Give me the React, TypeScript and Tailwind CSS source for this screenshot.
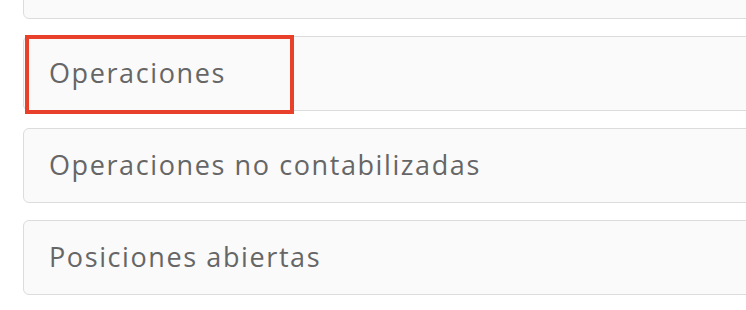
const items = ['', 'Operaciones', 'Operaciones no contabilizadas', 'Posiciones abiertas']

export default function App() {
  return (
    <div className="w-[746px] h-[310px] overflow-hidden bg-white" style={{ fontFamily: '"Open Sans", Lato, sans-serif' }}>
      <div className="flex flex-col gap-[17px] pl-[23px] -mt-[56px]">
        {items.map((label, i) => (
          <div
            key={i}
            className="relative w-[760px] h-[75px] flex items-center pl-[25px] rounded-[6px] border border-[#dcdcdc] bg-[#fafafa] text-[27px] tracking-[1.6px] text-[#666666]"
          >
            {label}
            {i === 1 && (
              <div className="absolute left-[1px] -top-[2px] w-[269px] h-[79px] border-[4px] border-[#e8402a]" />
            )}
          </div>
        ))}
      </div>
    </div>
  )
}
